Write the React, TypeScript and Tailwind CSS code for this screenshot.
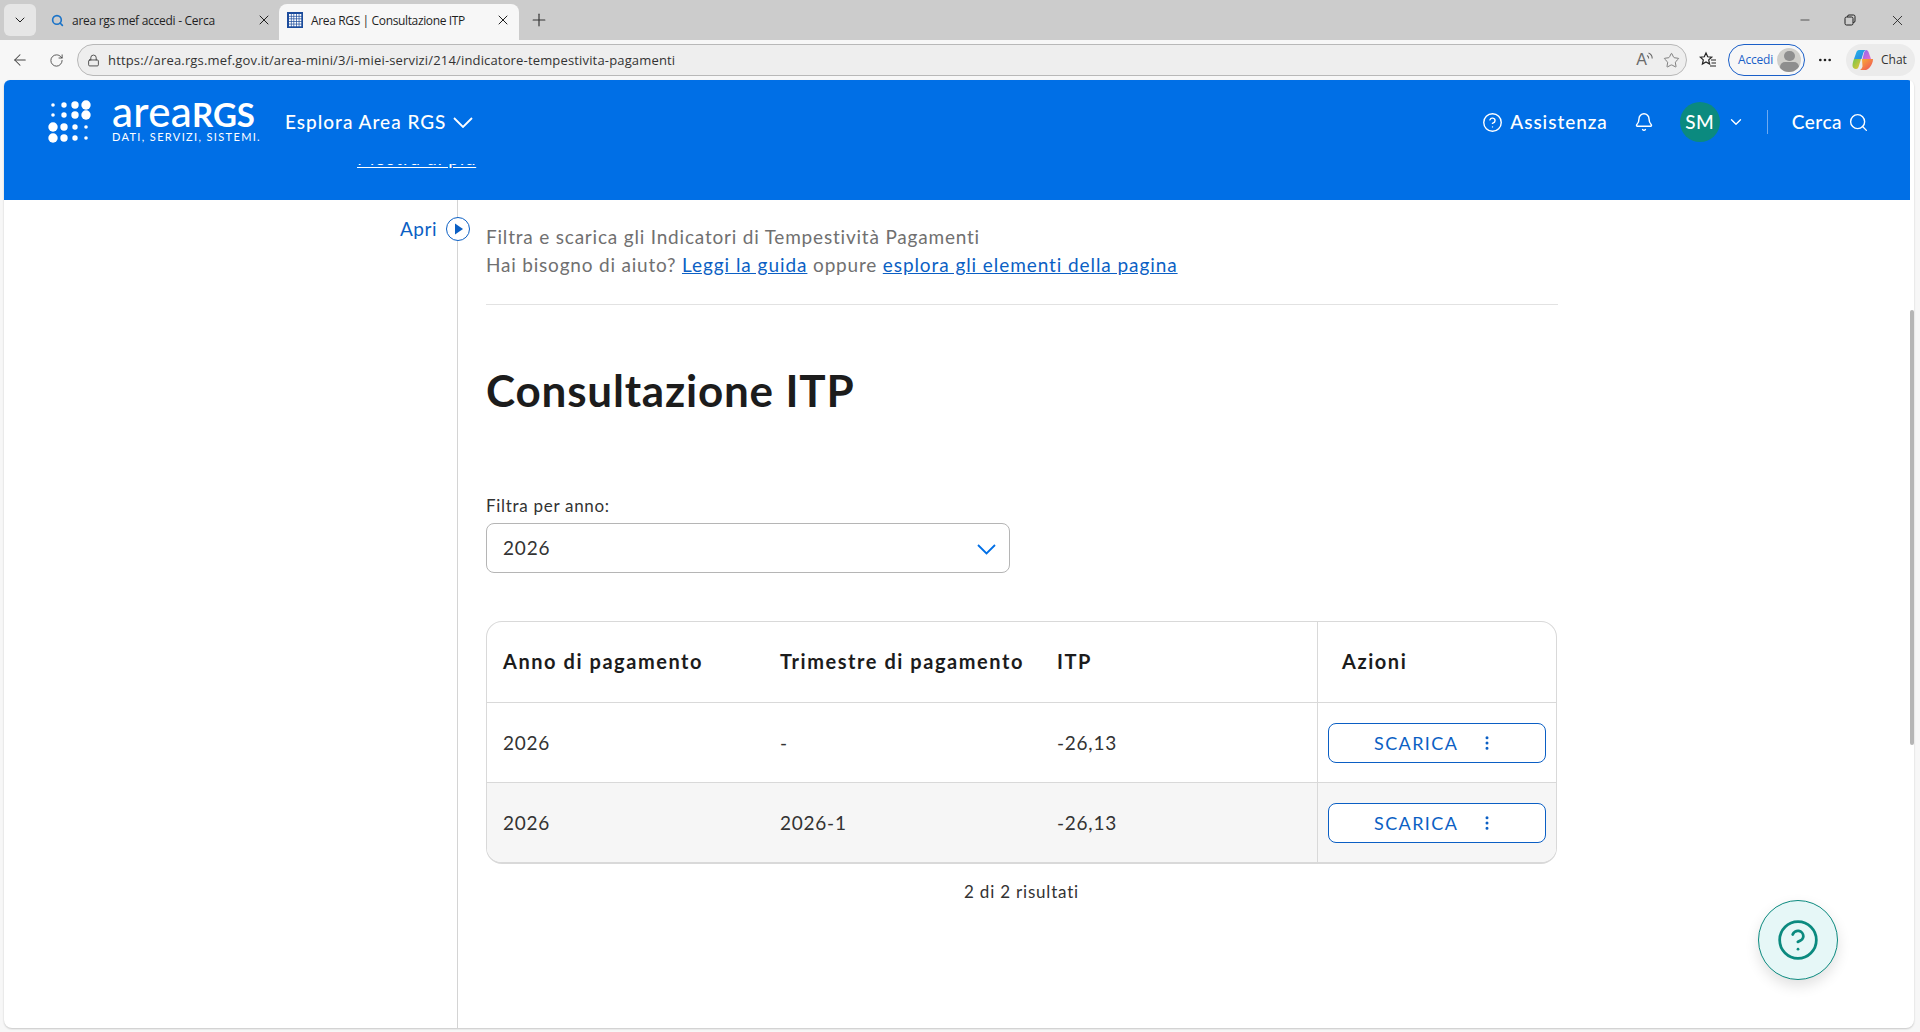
import { Bell, ChevronDown, CircleHelp, EllipsisVertical, Lock, Search, X, Plus, ArrowLeft, RotateCw, Star, Minus, MoreHorizontal } from 'lucide-react'

const rows = [
  { year: '2026', quarter: '-', itp: '-26,13', striped: false },
  { year: '2026', quarter: '2026-1', itp: '-26,13', striped: true },
]

const dots = [
  [1.8, 2.7, 3.7, 4.7],
  [1.8, 2.7, 3.7, 4.7],
  [4.7, 3.7, 2.7, 1.8],
  [4.7, 3.7, 2.7, 1.8],
]
const dotX = [5, 16, 27, 38]
const dotY = [5, 15, 27, 38]

function LogoDots() {
  return (
    <svg width="44" height="44" viewBox="0 0 44 44" fill="#fff" className="shrink-0">
      {dots.map((row, y) =>
        row.map((r, x) => <circle key={`${x}-${y}`} cx={dotX[x]} cy={dotY[y]} r={r} />),
      )}
    </svg>
  )
}

function Favicon() {
  const cells = []
  for (let y = 0; y < 5; y++) {
    for (let x = 0; x < 5; x++) {
      cells.push(<rect key={`${x}-${y}`} x={2 + x * 2.6} y={2 + y * 2.6} width="1.9" height="1.9" fill="#fff" />)
    }
  }
  return (
    <svg width="16" height="16" viewBox="0 0 16 16" className="shrink-0">
      <rect width="16" height="16" fill="#1c4c9c" />
      {cells}
    </svg>
  )
}

function CopilotIcon() {
  return (
    <svg width="22" height="22" viewBox="0 0 22 22" className="shrink-0">
      <defs>
        <linearGradient id="cpA" x1="0" y1="0" x2="1" y2="1">
          <stop offset="0" stopColor="#1fb6e8" />
          <stop offset="1" stopColor="#2f7fe0" />
        </linearGradient>
        <linearGradient id="cpB" x1="0" y1="0" x2="1" y2="1">
          <stop offset="0" stopColor="#8a6cf0" />
          <stop offset="1" stopColor="#e66bd0" />
        </linearGradient>
        <linearGradient id="cpC" x1="0" y1="0" x2="1" y2="1">
          <stop offset="0" stopColor="#6fc84e" />
          <stop offset="1" stopColor="#f2c230" />
        </linearGradient>
        <linearGradient id="cpD" x1="0" y1="0" x2="1" y2="1">
          <stop offset="0" stopColor="#f9b233" />
          <stop offset="1" stopColor="#ee4c5a" />
        </linearGradient>
      </defs>
      <path d="M7 1h7c-1.500.5-2.200 1.500-2.700 3L9.500 10H2l2.300-6.500C4.800 2 5.700 1 7 1z" fill="url(#cpA)" />
      <path d="M14 1c1.400 0 2.200 1 2.700 2.400L19 10h-8.500l1.500-6c.4-1.500 1-2.500 2-3z" fill="url(#cpB)" />
      <path d="M2 10h7l-2 6.500C6.500 19 5.500 20 4 20c-2 0-3.500-1.500-3.500-3.500 0-2 .7-4.500 1.500-6.500z" fill="url(#cpC)" />
      <path d="M10 10h11c0 3.500-1.500 6-3 8-1 1.300-2.200 2.500-4 3H8c1.500-.8 2-2 2.500-3.500z" fill="url(#cpD)" />
    </svg>
  )
}

function BrowserChrome() {
  return (
    <div className="font-['Open_Sans',sans-serif] text-[12px] text-[#1f1f1f]">
      <div className="h-10 bg-[#cccccc] flex pt-1 pl-1">
        <div className="w-8 h-8 rounded-md bg-[#e6e6e6] flex items-center justify-center">
          <ChevronDown size={16} strokeWidth={1.5} />
        </div>
        <div className="w-[243px] h-8 flex items-center pl-[14px] pr-[7px]">
          <Search size={13} strokeWidth={3} className="text-[#1a73c8] mr-[8px] ml-[1px]" />
          <span className="flex-1 pt-[2px] tracking-[-0.28px]">area rgs mef accedi - Cerca</span>
          <X size={16} strokeWidth={1.5} />
        </div>
        <div className="w-[240px] h-9 bg-[#f7f7f7] rounded-t-lg flex items-center pl-2 pr-2 pb-1">
          <Favicon />
          <span className="flex-1 ml-2 pt-[2px] tracking-[-0.36px]">Area RGS | Consultazione ITP</span>
          <X size={16} strokeWidth={1.5} />
        </div>
        <div className="w-10 h-8 flex items-center justify-center">
          <Plus size={20} strokeWidth={1.4} className="text-[#333]" />
        </div>
        <div className="ml-auto flex items-center h-8 pr-[14px]">
          <Minus size={14} strokeWidth={1.2} className="mr-8" />
          <svg width="12" height="12" viewBox="0 0 12 12" fill="none" stroke="#1f1f1f" className="mr-[33px]">
            <rect x="1" y="3" width="8" height="8" rx="1.500" />
            <path d="M3.500 3V2.500A1.500 1.500 0 0 1 5 1h4.500A1.500 1.500 0 0 1 11 2.500V7a1.500 1.500 0 0 1-1.500 1.500H9" />
          </svg>
          <X size={17} strokeWidth={1.2} />
        </div>
      </div>
      <div className="h-10 bg-[#f7f7f7] flex items-center pl-[11px] pr-[5px]">
        <ArrowLeft size={18} strokeWidth={1.4} className="text-[#444]" />
        <RotateCw size={15} strokeWidth={1.4} className="ml-[20px] text-[#444]" />
        <div className="ml-[13px] flex-1 h-8 rounded-full bg-[#eeeeee] border border-[#b8b8b8] flex items-center pl-[9px] pr-[6px]">
          <Lock size={13} strokeWidth={1.5} className="text-[#333]" />
          <span className="ml-[8px] pt-[2px] text-[13px] text-[#333] tracking-[0.16px]">https://area.rgs.mef.gov.it/area-mini/3/i-miei-servizi/214/indicatore-tempestivita-pagamenti</span>
          <div className="ml-auto flex items-center text-[#6b6b6b]">
            <span className="text-[16px] leading-none font-['Liberation_Sans',sans-serif]">A</span>
            <svg width="8" height="12" viewBox="0 0 8 12" fill="none" stroke="#6b6b6b" strokeWidth="1.100" className="-ml-[1px] -mt-[4px]">
              <path d="M1 3.500c1 .5 1.700 1.500 1.700 3M2.500 1c2 .8 3.700 2.700 3.700 5.500" />
            </svg>
            <Star size={17} strokeWidth={1.2} className="ml-[9px]" />
          </div>
        </div>
        <svg width="18" height="18" viewBox="0 0 18 18" fill="none" stroke="#222" strokeWidth="1.200" className="ml-3">
          <path d="M7 2l1.700 3.800 4 .4-3 2.700.9 4.100L7 11 3.400 13l.9-4.100-3-2.700 4-.4z" />
          <path d="M12 9h5M12.500 12h4.500M11 15h6" />
        </svg>
        <div className="ml-[11px] w-[77px] h-8 rounded-full border border-[#1a5fc8] flex items-center pl-[9px] pr-[3px]">
          <span className="text-[#1a5fc8] tracking-[-0.2px]">Accedi</span>
          <div className="ml-auto w-6 h-6 rounded-full bg-[#d0cfcb] overflow-hidden flex flex-col items-center">
            <div className="w-[11px] h-[11px] rounded-full bg-[#8e8e8e] mt-[3px]" />
            <div className="w-[19px] h-[12px] rounded-full bg-[#8e8e8e] mt-[1px]" />
          </div>
        </div>
        <MoreHorizontal size={16} strokeWidth={2} className="ml-3" />
        <div className="ml-[13px] w-[69px] h-8 rounded-full bg-[#ebebeb] flex items-center pl-[6px]">
          <CopilotIcon />
          <span className="ml-[7px] text-[#333]">Chat</span>
        </div>
      </div>
    </div>
  )
}

function Header() {
  return (
    <div className="bg-[#006fe6] text-white shrink-0 font-['Lato',sans-serif]">
      <div className="h-20 pt-[4px] flex items-center pl-11 pr-[41px]">
        <LogoDots />
        <div className="ml-[20px] w-[173px] -mt-[3px]">
          <div className="h-[31px] leading-[27px] whitespace-nowrap">
            <span className="text-[42px] font-medium tracking-[0.3px]">area</span>
            <span className="text-[33px] font-bold">RGS</span>
          </div>
          <div className="mt-[1px] text-[11px] leading-[14px] tracking-[1.35px] whitespace-nowrap">DATI, SERVIZI, SISTEMI.</div>
        </div>
        <span className="text-[19px] font-medium tracking-[1px]">Esplora Area RGS</span>
        <svg width="20" height="11" viewBox="0 0 20 11" fill="none" stroke="#fff" strokeWidth="1.800" className="ml-[7px]">
          <path d="M1 1l9 9 9-9" />
        </svg>
        <CircleHelp size={21} strokeWidth={1.6} className="ml-auto" />
        <span className="ml-[7px] text-[19px] font-medium tracking-[0.95px]">Assistenza</span>
        <Bell size={20} strokeWidth={1.7} className="ml-[26px]" />
        <div className="ml-[26px] w-10 h-10 rounded-full bg-[#0b8a7f] flex items-center justify-center text-[19px] font-medium tracking-[0.5px]">SM</div>
        <ChevronDown size={18} strokeWidth={1.8} className="ml-[7px]" />
        <div className="ml-[22px] w-px h-6 bg-[#6eaaf0]" />
        <span className="ml-[24px] text-[19px] font-medium tracking-[0.5px]">Cerca</span>
        <Search size={21} strokeWidth={1.6} className="ml-[6px]" />
      </div>
      <div className="h-10 pt-[4px] pl-[353px]">
        <div className="h-[36px] overflow-hidden">
          <div className="-mt-[18px] text-[19px] leading-6 tracking-[0.7px] underline underline-offset-2 w-fit">Mostra di più</div>
        </div>
      </div>
    </div>
  )
}

function Sidebar() {
  return (
    <aside className="relative w-[454px] shrink-0 border-r border-[#d4d4d4]">
      <span className="absolute right-[20px] top-[16px] text-[19px] leading-[26px] text-[#0b5fc4] tracking-[0.5px]">Apri</span>
      <div className="absolute -right-[12.500px] top-[17px] w-6 h-6 rounded-full border-[1.500px] border-[#0b5fc4] bg-white flex items-center justify-center">
        <svg width="8" height="12" viewBox="0 0 8 12" fill="#0b5fc4" className="ml-[2px]">
          <path d="M0 .5L8 6 0 11.500z" />
        </svg>
      </div>
    </aside>
  )
}

function Table() {
  return (
    <div className="mt-12 w-[1071px] rounded-2xl border border-b-2 border-[#d9d9d9] overflow-hidden text-[19px] tracking-[0.75px]">
      <div className="h-20 flex items-center text-[20px] tracking-[1.55px] font-bold text-[#1c1c1c]">
        <div className="w-[276px] pl-[16px] pb-[2px] shrink-0">Anno di pagamento</div>
        <div className="w-[276px] pl-[17px] pb-[2px] shrink-0 whitespace-nowrap">Trimestre di pagamento</div>
        <div className="w-[278px] pl-[18px] pb-[2px] shrink-0">ITP</div>
        <div className="flex-1 h-full flex items-center border-l border-[#d9d9d9] pl-6 pb-[2px]">Azioni</div>
      </div>
      {rows.map((row, i) => (
        <div key={i} className={`h-20 flex items-center border-t border-[#d9d9d9] text-[#333] ${row.striped ? 'bg-[#f6f6f6]' : 'bg-white'}`}>
          <div className="w-[276px] pl-[16px] pt-[2px] shrink-0">{row.year}</div>
          <div className="w-[276px] pl-[17px] pt-[2px] shrink-0">{row.quarter}</div>
          <div className="w-[278px] pl-[18px] pt-[2px] shrink-0">{row.itp}</div>
          <div className="flex-1 h-full flex items-center border-l border-[#d9d9d9] pl-[10px]">
            <div className="w-[218px] h-10 rounded-lg border border-[#0b5fc4] bg-white flex items-center pl-[45px] text-[#0b5fc4]">
              <span className="pt-[2px] text-[18px] tracking-[1.4px]">SCARICA</span>
              <EllipsisVertical size={18} strokeWidth={2} className="ml-[20px]" />
            </div>
          </div>
        </div>
      ))}
    </div>
  )
}

function Content() {
  return (
    <main className="pl-7 pt-[23px] w-[1100px] shrink-0 text-[19px] tracking-[0.8px]">
      <p className="leading-7 text-[#707070]">Filtra e scarica gli Indicatori di Tempestività Pagamenti</p>
      <p className="leading-7 text-[#707070]">
        Hai bisogno di aiuto? <a className="text-[#0b5fc4] underline tracking-[0.95px]">Leggi la guida</a> oppure{' '}
        <a className="text-[#0b5fc4] underline tracking-[0.92px]">esplora gli elementi della pagina</a>
      </p>
      <div className="mt-[25px] h-px bg-[#e2e2e2]" />
      <h1 className="mt-[59px] text-[44px] leading-[52px] font-bold text-[#1c1c1c] tracking-[0.8px]">Consultazione ITP</h1>
      <label className="mt-[78px] block text-[17px] leading-6 text-[#333] tracking-[0.7px]">Filtra per anno:</label>
      <div className="mt-[5px] w-[524px] h-[50px] rounded-lg border border-[#b5b5b5] flex items-center pl-[16px] pr-[13px] text-[#333]">
        <span>2026</span>
        <svg width="19" height="11" viewBox="0 0 19 11" fill="none" stroke="#006fe6" strokeWidth="1.800" className="ml-auto mt-[3px]">
          <path d="M1 1l8.500 8.500L18 1" />
        </svg>
      </div>
      <Table />
      <p className="mt-4 w-[1071px] text-center text-[17px] leading-6 text-[#333] tracking-[0.8px]">2 di 2 risultati</p>
    </main>
  )
}

export default function App() {
  return (
    <div className="h-[1032px] overflow-hidden bg-[#f7f7f7] flex flex-col relative">
      <BrowserChrome />
      <div className="h-[948px] ml-1 mr-[6px] bg-white rounded-t-md rounded-b-lg shadow-[0_1px_2px_rgba(0,0,0,0.2)] flex overflow-hidden relative font-['Lato',sans-serif]">
        <div className="flex-1 flex flex-col min-w-0">
          <Header />
          <div className="flex-1 flex">
            <Sidebar />
            <Content />
          </div>
        </div>
        <div className="w-1 shrink-0 pt-[230px]">
          <div className="h-[435px] rounded-full bg-[#b5b5b5]" />
        </div>
      </div>
      <button className="absolute left-[1758px] top-[900px] w-20 h-20 rounded-full bg-[#e6f7f7] border border-[#0b8a7f] shadow-[0_6px_14px_rgba(0,0,0,0.12)] flex items-center justify-center text-[#0b8a7f]">
        <CircleHelp size={44} strokeWidth={1.5} />
      </button>
    </div>
  )
}
